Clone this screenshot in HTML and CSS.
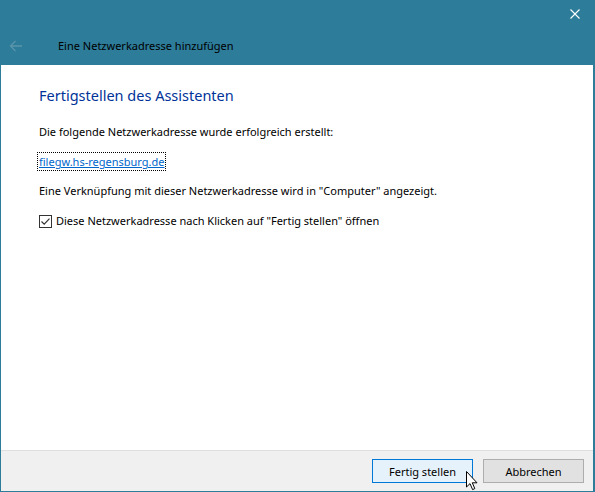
FILE: index.html
```html
<!DOCTYPE html>
<html lang="de">
<head>
<meta charset="utf-8">
<title>Eine Netzwerkadresse hinzufügen</title>
<link rel="stylesheet" href="styles.css">
</head>
<body>
<div class="window">
  <div class="titlebar">
    <div class="caption-row">
      <span class="close-btn">
        <svg width="10" height="10" viewBox="0 0 10 10"><path d="M0.5 0.5 L9.5 9.5 M9.5 0.5 L0.5 9.5" stroke="#ffffff" stroke-width="1.1" fill="none"/></svg>
      </span>
    </div>
    <div class="nav-row">
      <span class="back-btn">
        <svg width="14" height="12" viewBox="0 0 14 12"><path d="M13 6 H1.5 M6.5 1 L1.5 6 L6.5 11" stroke="#5a95ab" stroke-width="1.3" fill="none"/></svg>
      </span>
      <span class="wizard-title">Eine Netzwerkadresse hinzufügen</span>
    </div>
  </div>
  <div class="content">
    <h1 class="main-instruction">Fertigstellen des Assistenten</h1>
    <p class="text">Die folgende Netzwerkadresse wurde erfolgreich erstellt:</p>
    <p class="text link-row"><a class="link" href="#">filegw.hs-regensburg.de</a></p>
    <p class="text">Eine Verknüpfung mit dieser Netzwerkadresse wird in "Computer" angezeigt.</p>
    <label class="check-row">
      <span class="checkbox">
        <svg width="11" height="11" viewBox="0 0 11 11"><path d="M1.5 5.5 L4.2 8.2 L9.5 2.6" stroke="#333333" stroke-width="1.2" fill="none"/></svg>
      </span>
      <span class="text">Diese Netzwerkadresse nach Klicken auf "Fertig stellen" öffnen</span>
    </label>
  </div>
  <div class="footer">
    <button class="btn btn-default">Fertig stellen</button>
    <button class="btn">Abbrechen</button>
    <svg class="cursor" width="13" height="20" viewBox="0 0 13 20"><path d="M0.5 0.5 V16 L4 12.6 L6.6 18.6 L8.8 17.6 L6.3 11.8 H11 Z" fill="#ffffff" stroke="#000000" stroke-width="1"/></svg>
  </div>
</div>
</body>
</html>
```
FILE: styles.css
```css
html, body {
  margin: 0;
  padding: 0;
  background: #ffffff;
}
body {
  font-family: "Noto Sans", "DejaVu Sans", sans-serif;
  font-size: 11px;
  color: #000000;
}
.window {
  width: 595px;
  height: 492px;
  box-sizing: border-box;
  border-left: 1px solid #2d7c9a;
  border-right: 2px solid #2d7c9a;
  border-bottom: 1px solid #2d7c9a;
  display: flex;
  flex-direction: column;
  background: #ffffff;
  position: relative;
}
.titlebar {
  height: 65px;
  background: #2d7c9a;
  display: flex;
  flex-direction: column;
  flex: none;
}
.caption-row {
  height: 30px;
  display: flex;
  justify-content: flex-end;
}
.close-btn {
  width: 46px;
  height: 30px;
  display: flex;
  align-items: center;
  justify-content: center;
  margin-right: -5px;
}
.close-btn svg { margin-top: -2px; }
.nav-row {
  height: 31px;
  display: flex;
  align-items: center;
}
.back-btn {
  width: 14px;
  margin-left: 8px;
  display: flex;
  align-items: center;
}
.wizard-title {
  margin-left: 35px;
  font-size: 11px;
  color: #000000;
}
.content {
  flex: 1;
  padding: 20px 0 0 38px;
}
.main-instruction {
  margin: 0 0 19px 0;
  font-size: 14.5px;
  font-weight: normal;
  color: #003399;
  line-height: 20px;
}
.text {
  margin: 0 0 14px 0;
  line-height: 16px;
  font-size: 11px;
}
.link-row { margin-bottom: 13px; }
.link {
  color: #0066cc;
  text-decoration: underline;
  outline: 1px dotted #000000;
  outline-offset: 1px;
}
.check-row {
  display: flex;
  align-items: center;
  gap: 4px;
}
.check-row .text { margin: 0; }
.checkbox {
  width: 11px;
  height: 11px;
  border: 1px solid #333333;
  display: flex;
  align-items: center;
  justify-content: center;
  background: #ffffff;
}
.footer {
  flex: none;
  height: 40px;
  border-top: 1px solid #dfdfdf;
  background: #f0f0f0;
  display: flex;
  align-items: center;
  justify-content: flex-end;
  gap: 10px;
  padding-right: 9px;
  position: relative;
}
.btn {
  width: 101px;
  height: 24px;
  font-family: "Noto Sans", "DejaVu Sans", sans-serif;
  font-size: 11px;
  color: #000000;
  background: #e1e1e1;
  border: 1px solid #adadad;
  padding: 0;
  margin: 0;
}
.btn-default {
  background: #e5f1fb;
  border: 1px solid #0078d7;
}
.cursor {
  position: absolute;
  left: 465px;
  top: 20px;
}
```
